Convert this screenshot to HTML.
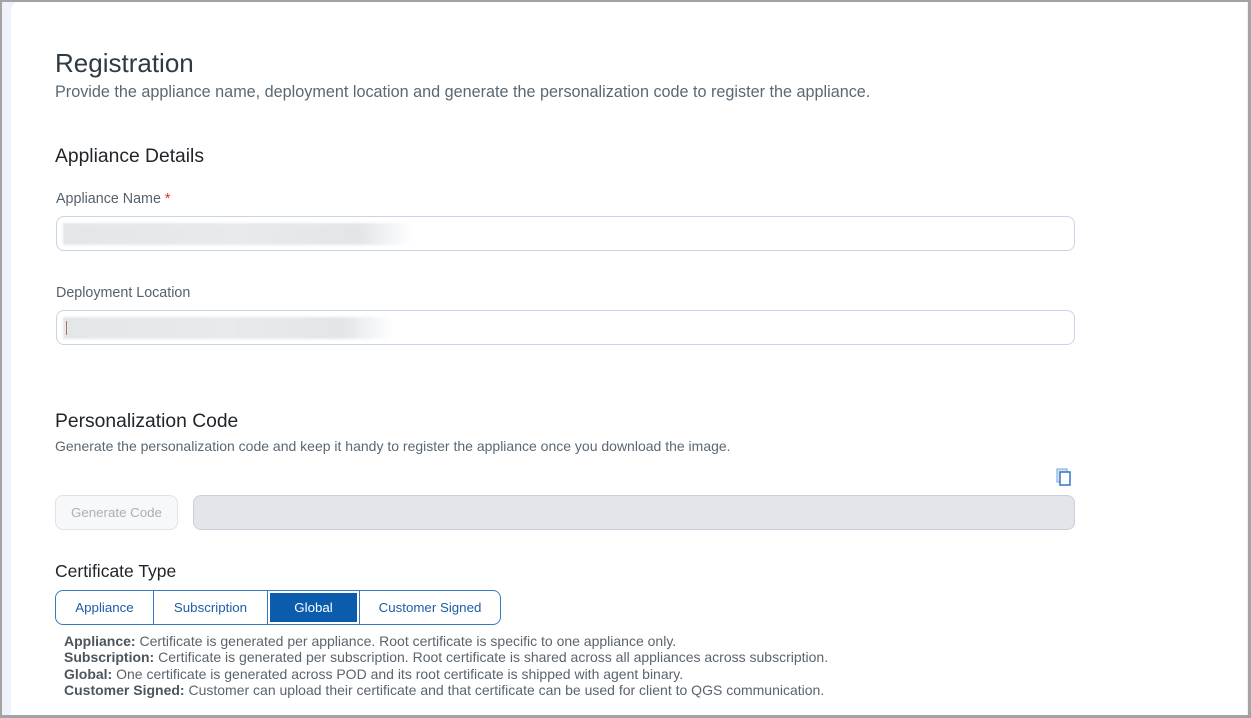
<!DOCTYPE html>
<html><head><meta charset="utf-8">
<style>
*{box-sizing:border-box;margin:0;padding:0}
html,body{width:1251px;height:718px;overflow:hidden;background:#fff;font-family:"Liberation Sans",sans-serif}
.frame{position:absolute;left:0;top:0;width:1251px;height:718px;border:2px solid #a3a3a3;border-right-width:3px;border-bottom-width:3px;background:#eef3fa}
.card{position:absolute;left:11px;top:2px;width:1236px;height:713px;background:#fff;border-top-left-radius:8px}
.abs{position:absolute;white-space:nowrap}
h1{font-weight:normal;font-size:26px;color:#2f3a44}
.sub{font-size:16.2px;color:#5b6873}
h2{font-weight:normal;font-size:19.3px;color:#1f2429}
.lbl{font-size:14.3px;color:#55616c}
.inp{position:absolute;left:56px;width:1019px;height:35px;border:1px solid #c6d5e8;border-radius:8px;background:#fff}
.blur{position:absolute;left:6px;top:6px;height:22px;width:350px;background:linear-gradient(90deg,#e4e7ea 0%,#e8ebed 50%,#e3e6e9 85%,#fff 100%);filter:blur(1px)}
.seg{position:absolute;left:55px;top:590px;height:35px;width:446px;border:1px solid #3b78bf;border-radius:8px;display:flex;overflow:hidden}
.seg div{font-size:13.3px;color:#1d5da8;display:flex;align-items:center;justify-content:center;border-right:1px solid #3b78bf}
.desc{font-size:14px;color:#5a646e;line-height:16.3px}
.desc b{color:#4b555e}
</style></head><body>
<div class="frame"></div>
<div class="card"></div>
<h1 class="abs" style="left:55px;top:48px">Registration</h1>
<div class="abs sub" style="left:55px;top:83px">Provide the appliance name, deployment location and generate the personalization code to register the appliance.</div>
<h2 class="abs" style="left:55px;top:146px">Appliance Details</h2>
<div class="abs lbl" style="left:56px;top:191px">Appliance Name <span style="color:#d9322b">*</span></div>
<div class="inp" style="top:216px"><div class="blur"></div></div>
<div class="abs lbl" style="left:56px;top:285px">Deployment Location</div>
<div class="inp" style="top:310px"><div class="blur" style="width:330px"></div><div style="position:absolute;left:9px;top:10px;width:1px;height:14px;background:#b97050"></div></div>
<h2 class="abs" style="left:55px;top:411px">Personalization Code</h2>
<div class="abs" style="left:55px;top:438px;font-size:14px;color:#5b6873">Generate the personalization code and keep it handy to register the appliance once you download the image.</div>
<svg class="abs" style="left:1055px;top:467px" width="18" height="20" viewBox="0 0 18 20"><rect x="2" y="2" width="10" height="13" fill="#d7e3f3" stroke="#8fb0da" stroke-width="1.2"/><rect x="5" y="5" width="10" height="13" fill="#fff" stroke="#3c7fcc" stroke-width="1.6"/></svg>
<div class="abs" style="left:55px;top:495px;width:123px;height:35px;border:1px solid #dfe3e7;border-radius:8px;background:#f7f8f9;font-size:13.3px;color:#a9b0b7;display:flex;align-items:center;justify-content:center">Generate Code</div>
<div class="abs" style="left:193px;top:495px;width:882px;height:35px;border:1px solid #c8cfd6;border-radius:8px;background:#e2e6ea"></div>
<h2 class="abs" style="left:55px;top:561px;font-size:17.5px">Certificate Type</h2>
<div class="seg">
<div style="width:98px">Appliance</div>
<div style="width:114px">Subscription</div>
<div style="width:92px;background:#0b5cad;color:#fff;box-shadow:inset 0 0 0 2px #fff, inset 0 0 0 3px #0b5cad">Global</div>
<div style="width:140px;border-right:none">Customer Signed</div>
</div>
<div class="abs desc" style="left:64px;top:633px">
<b>Appliance:</b> Certificate is generated per appliance. Root certificate is specific to one appliance only.<br>
<b>Subscription:</b> Certificate is generated per subscription. Root certificate is shared across all appliances across subscription.<br>
<b>Global:</b> One certificate is generated across POD and its root certificate is shipped with agent binary.<br>
<b>Customer Signed:</b> Customer can upload their certificate and that certificate can be used for client to QGS communication.
</div>
</body></html>
